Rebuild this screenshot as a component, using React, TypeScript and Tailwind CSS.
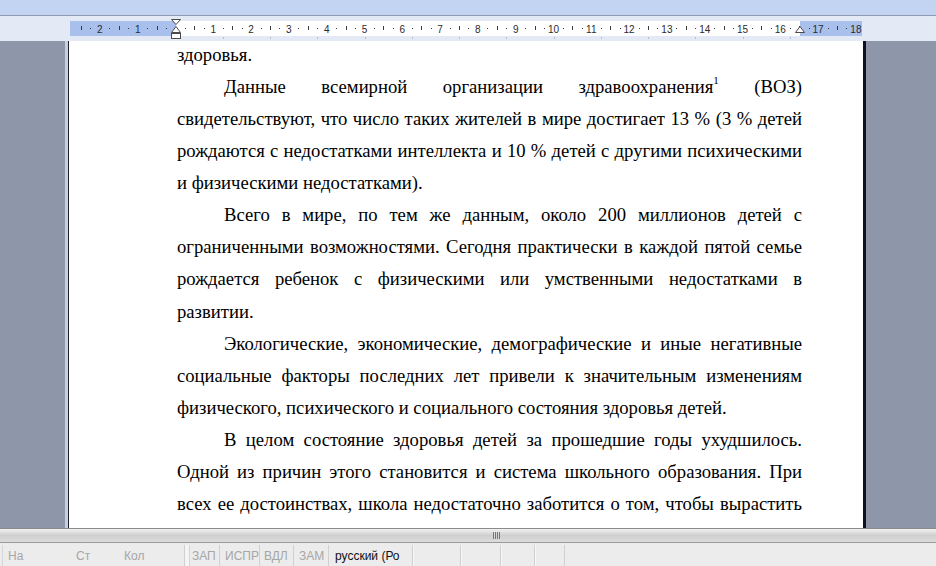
import React from 'react';

type Line = { t: React.ReactNode; indent?: boolean; last?: boolean };

const lines: Line[] = [
  { t: 'здоровья.', last: true },
  {
    t: (
      <>
        Данные всемирной организации здравоохранения
        <sup className="text-[11px] align-[3px] leading-none">1</sup> (ВОЗ)
      </>
    ),
    indent: true,
  },
  { t: 'свидетельствуют, что число таких жителей в мире достигает 13 % (3 % детей' },
  { t: 'рождаются с недостатками интеллекта и 10 % детей с другими психическими' },
  { t: 'и физическими недостатками).', last: true },
  { t: 'Всего в мире, по тем же данным, около 200 миллионов детей с', indent: true },
  { t: 'ограниченными возможностями. Сегодня практически в каждой пятой семье' },
  { t: 'рождается ребенок с физическими или умственными недостатками в' },
  { t: 'развитии.', last: true },
  { t: 'Экологические, экономические, демографические и иные негативные', indent: true },
  { t: 'социальные факторы последних лет привели к значительным изменениям' },
  { t: 'физического, психического и социального состояния здоровья детей.', last: true },
  { t: 'В целом состояние здоровья детей за прошедшие годы ухудшилось.', indent: true },
  { t: 'Одной из причин этого становится и система школьного образования. При' },
  { t: 'всех ее достоинствах, школа недостаточно заботится о том, чтобы вырастить' },
];

const X0 = 175.5;
const CM = 37.8;

function Ruler() {
  const marks: React.ReactNode[] = [];
  for (let q = -10; q <= 74; q++) {
    const x = X0 + (q * CM) / 4;
    if (x < 72 || x > 860) continue;
    if (q === 0) continue;
    if (q % 4 === 0) {
      const n = Math.abs(q / 4);
      marks.push(
        <text key={q} x={x} y={16.5} textAnchor="middle" fontSize="10" fill="#2b2b2b" fontFamily="'Liberation Sans', Arial, sans-serif">
          {n}
        </text>
      );
    } else if (q % 2 === 0) {
      marks.push(<rect key={q} x={Math.round(x)} y={10} width={1} height={4} fill="#3a3a3a" />);
    } else {
      marks.push(<rect key={q} x={Math.round(x)} y={12} width={1} height={1} fill="#3a3a3a" />);
    }
  }
  const tabs: React.ReactNode[] = [];
  for (let i = 1; i <= 13; i++) {
    const x = Math.round(X0 + i * 1.25 * CM);
    tabs.push(<rect key={i} x={x} y={21} width={1} height={2} fill="#b8bfcc" />);
  }
  return (
    <svg width="936" height="25" className="block">
      <rect x="70" y="5" width="106" height="15" fill="#a9c0ec" />
      <rect x="176" y="5" width="624" height="15" fill="#ffffff" />
      <rect x="800" y="5" width="62" height="15" fill="#a9c0ec" />
      {marks}
      {tabs}
      {/* left indent markers */}
      <path d="M171.5 3.5 H180.5 L176 8.5 Z" fill="#ffffff" stroke="#4a4a4a" />
      <path d="M176 10.5 L180.5 16.5 H171.5 Z" fill="#ffffff" stroke="#4a4a4a" />
      <rect x="171.5" y="17.5" width="9" height="5" fill="#ffffff" stroke="#4a4a4a" />
      {/* right indent marker */}
      <path d="M800 10.5 L804.5 16.5 H795.5 Z" fill="#ffffff" stroke="#4a4a4a" />
    </svg>
  );
}

export default function App() {
  return (
    <div className="w-[936px] h-[566px] overflow-hidden flex flex-col bg-[#ececec] font-['Liberation_Sans']">
      {/* Top toolbar edge */}
      <div className="h-[15px] shrink-0 bg-[#c3d3f2]" />
      <div className="h-px shrink-0 bg-[#8f9bb3]" />

      {/* Ruler */}
      <div className="h-[25px] shrink-0 bg-[#e3eaf6]">
        <Ruler />
      </div>

      {/* Document area */}
      <div className="h-[487px] shrink-0 flex bg-[#8e97aa]">
        <div className="w-[65px] shrink-0" />
        <div className="w-[3px] shrink-0 bg-[#c9ced9]" />
        <div className="w-[795px] shrink-0 bg-white border-l border-[#1e2230] overflow-hidden">
          <div className="mt-[-2.5px] ml-[108px] w-[625px] font-['Liberation_Serif'] text-[18.67px] leading-[32.15px] text-black">
            {lines.map((l, i) => (
              <div
                key={i}
                className={
                  (l.last ? 'text-left ' : 'text-justify [text-align-last:justify] ') +
                  (l.indent ? 'pl-[47px] ' : '') +
                  'h-[32.15px] overflow-hidden'
                }
              >
                {l.t}
              </div>
            ))}
          </div>
        </div>
        <div className="w-[3px] shrink-0 bg-[#0e1020]" />
        <div className="flex-1" />
      </div>

      {/* Horizontal scroll bar */}
      <div className="h-px shrink-0 bg-[#8a8a8a]" />
      <div className="h-[14px] shrink-0 flex items-center justify-center bg-gradient-to-b from-[#f2f2f2] via-[#cfcfcf] to-[#dcdcdc] border-b border-[#9a9a9a]">
        <div className="ml-[56px] flex gap-px">
          <div className="w-px h-[7px] bg-[#777]" />
          <div className="w-px h-[7px] bg-[#777]" />
          <div className="w-px h-[7px] bg-[#777]" />
          <div className="w-px h-[7px] bg-[#777]" />
        </div>
      </div>

      {/* Status bar */}
      <div className="flex-1 flex items-stretch bg-[#ececec] text-[12px] text-[#a6a6a6] pt-[2px]">
        <div className="w-[3px] border-r border-[#d6d6d6]" />
        <div className="w-[182px] flex items-center pl-[5px] border-r border-[#cfcfcf]">
          <span className="w-[68px]">На</span>
          <span className="w-[48px]">Ст</span>
          <span>Кол</span>
        </div>
        <div className="w-[5px] border-r border-[#d6d6d6] bg-[#f4f4f4]" />
        <div className="w-[30px] flex items-center pl-[2px] border-r border-[#d0d0d0]">ЗАП</div>
        <div className="w-[40px] flex items-center pl-[5px] border-r border-[#d0d0d0]">ИСПР</div>
        <div className="w-[34px] flex items-center pl-[4px] border-r border-[#d0d0d0]">ВДЛ</div>
        <div className="w-[35px] flex items-center pl-[5px] border-r border-[#d0d0d0]">ЗАМ</div>
        <div className="w-[84px] flex items-center pl-[6px] text-[#111] border-r border-[#d0d0d0]">русский (Ро</div>
        <div className="w-[48px] border-r border-[#d0d0d0] border-l border-l-[#f8f8f8]" />
        <div className="w-[40px] border-r border-[#d0d0d0] border-l border-l-[#f8f8f8]" />
        <div className="w-[34px] border-r border-[#d0d0d0] border-l border-l-[#f8f8f8]" />
        <div className="w-[30px] border-r border-[#d0d0d0] border-l border-l-[#f8f8f8]" />
        <div className="flex-1" />
      </div>
    </div>
  );
}
